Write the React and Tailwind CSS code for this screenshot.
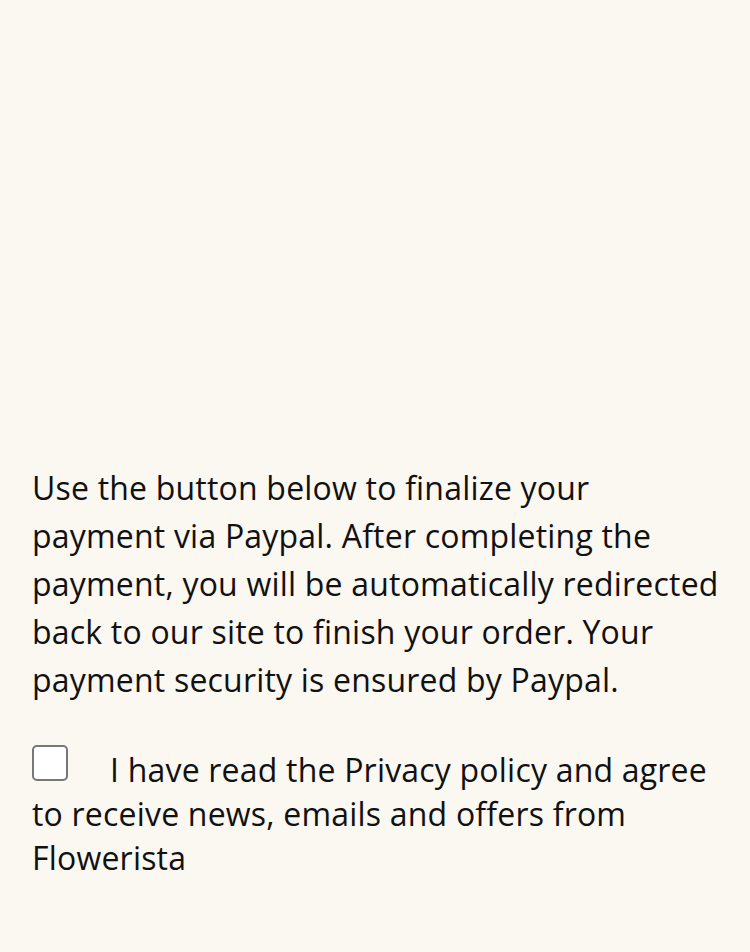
export default function App() {
  return (
    <div
      className="min-h-[952px] w-full bg-[#fbf7f1] text-[#111111]"
      style={{ fontFamily: '"Open Sans", "Liberation Sans", sans-serif' }}
    >
      <div className="pl-8 pr-6 pt-[464px]">
        <p className="text-[32px] leading-[48px] tracking-[0.2px]">
          Use the button below to finalize your payment via Paypal. After completing the payment, you
          will be automatically redirected back to our site to finish your order. Your payment security
          is ensured by Paypal.
        </p>

        <label className="mt-[42px] block text-[32px] leading-[44px] tracking-[0.2px]">
          <span className="mr-[42px] inline-block h-[36px] w-[36px] -translate-y-[1px] rounded-[5px] border-2 border-[#777777] bg-white align-baseline"></span>
          I have read the Privacy policy and agree to receive news, emails and offers from Flowerista
        </label>
      </div>
    </div>
  );
}
